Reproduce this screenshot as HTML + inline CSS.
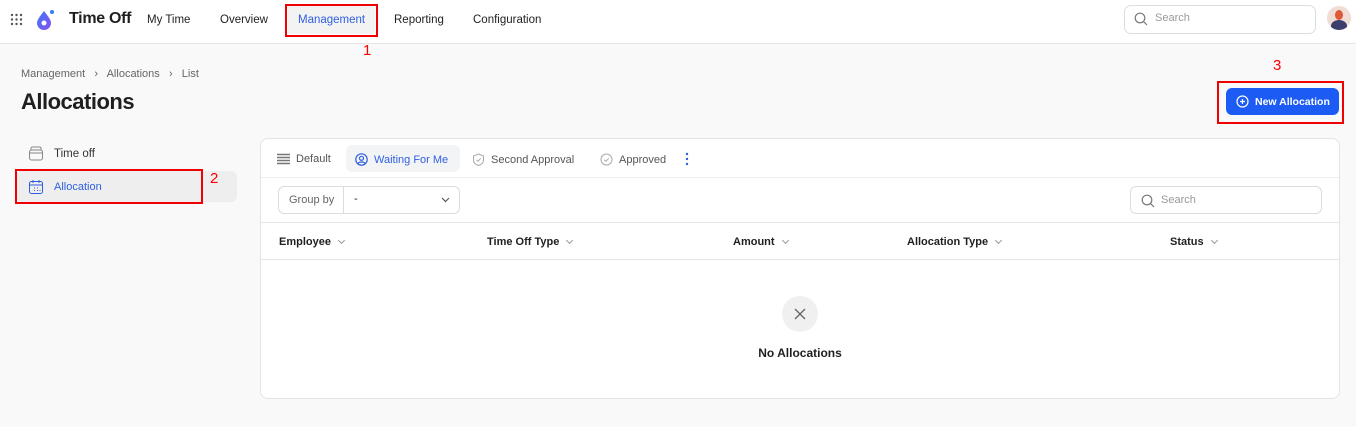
<!DOCTYPE html>
<html><head><meta charset="utf-8"><style>
*{box-sizing:border-box;margin:0;padding:0}
body{width:1356px;height:427px;background:#f9f9f9;font-family:"Liberation Sans",sans-serif;position:relative;overflow:hidden;color:#1f1f1f}
.abs{position:absolute}
.hdr{left:0;top:0;width:1356px;height:44px;background:#fff;border-bottom:1px solid #e5e5e5}
.nav{font-size:11.5px;color:#222;top:14px}
.red{border:2px solid #f00000;position:absolute}
.card{left:260px;top:138px;width:1080px;height:261px;background:#fff;border:1px solid #e3e3e3;border-radius:8px}
.tab{font-size:11px;color:#555;top:14px;display:flex;align-items:center;gap:6px}
.th{font-size:11px;font-weight:bold;top:97px;color:#1f1f1f}
.th:after{content:"";display:inline-block;width:4px;height:4px;border-right:1px solid #999;border-bottom:1px solid #999;transform:rotate(45deg);margin-left:8px;position:relative;top:-2px}
</style></head><body>
<div class="abs hdr"></div>
<svg class="abs" style="left:10px;top:13px" width="13" height="13"><g fill="#555"><circle cx="2" cy="2" r="1.2"/><circle cx="6.5" cy="2" r="1.2"/><circle cx="11" cy="2" r="1.2"/><circle cx="2" cy="6.5" r="1.2"/><circle cx="6.5" cy="6.5" r="1.2"/><circle cx="11" cy="6.5" r="1.2"/><circle cx="2" cy="11" r="1.2"/><circle cx="6.5" cy="11" r="1.2"/><circle cx="11" cy="11" r="1.2"/></g></svg>
<svg class="abs" style="left:34px;top:8px" width="22" height="22"><defs><linearGradient id="g" x1="0" y1="0" x2="1" y2="1"><stop offset="0" stop-color="#3a7bf6"/><stop offset="1" stop-color="#8a4ef0"/></linearGradient></defs><path d="M10 3 C6 8 3 12 3 15 a7 7 0 0 0 14 0 C17 12 14 8 10 3z" fill="url(#g)"/><circle cx="10" cy="15" r="2.5" fill="#fff"/><circle cx="18" cy="4" r="2" fill="#3a7bf6"/></svg>
<div class="abs" style="left:69px;top:10px;font-size:16px;font-weight:bold;letter-spacing:-0.3px">Time Off</div>
<div class="abs nav" style="left:147px">My Time</div>
<div class="abs nav" style="left:220px">Overview</div>
<div class="abs" style="left:288px;top:6px;width:87px;height:28px;background:#f3f3f3"></div>
<div class="abs nav" style="left:298px;color:#2f5fe0">Management</div>
<div class="red" style="left:285px;top:4px;width:93px;height:33px"></div>
<div class="abs" style="left:363px;top:42px;color:#f00;font-size:15px">1</div>
<div class="abs nav" style="left:394px">Reporting</div>
<div class="abs nav" style="left:473px">Configuration</div>
<div class="abs" style="left:1124px;top:5px;width:192px;height:29px;border:1px solid #ddd;border-radius:7px;background:#fff"></div>
<svg class="abs" style="left:1134px;top:12px" width="14" height="14"><circle cx="6" cy="6" r="4.8" fill="none" stroke="#777" stroke-width="1.2"/><path d="M9.5 9.5L13 13" stroke="#777" stroke-width="1.2"/></svg>
<div class="abs" style="left:1155px;top:12px;font-size:11px;color:#999">Search</div>
<div class="abs" style="left:1327px;top:6px;width:24px;height:24px;border-radius:50%;background:#f0ddd5;overflow:hidden"><div style="position:absolute;left:4px;top:14px;width:16px;height:12px;border-radius:50% 50% 0 0;background:#3c3f6e"></div><div style="position:absolute;left:8px;top:4px;width:8px;height:10px;border-radius:50%;background:#e0583a"></div></div>
<div class="abs" style="left:21px;top:68px;font-size:11px;color:#666">Management &nbsp;&nbsp;›&nbsp;&nbsp; Allocations &nbsp;&nbsp;›&nbsp;&nbsp; List</div>
<div class="abs" style="left:21px;top:89px;font-size:22px;font-weight:bold;letter-spacing:-0.5px">Allocations</div>
<div class="abs" style="left:1273px;top:57px;color:#f00;font-size:15px">3</div>
<div class="red" style="left:1217px;top:81px;width:127px;height:43px"></div>
<div class="abs" style="left:1226px;top:88px;width:113px;height:27px;background:#1c5cf5;border-radius:6px;color:#fff;font-size:10.5px;font-weight:bold;display:flex;align-items:center;padding-left:10px;gap:6px"><svg width="13" height="13"><circle cx="6.5" cy="6.5" r="5.5" fill="none" stroke="#fff" stroke-width="1.2"/><path d="M6.5 4v5M4 6.5h5" stroke="#fff" stroke-width="1.2"/></svg>New Allocation</div>
<svg class="abs" style="left:28px;top:146px" width="16" height="15"><rect x="1.5" y="4" width="13" height="10" rx="2" fill="none" stroke="#888"/><path d="M3 4V2.5a1.5 1.5 0 0 1 1.5-1.5h7A1.5 1.5 0 0 1 13 2.5V4M1.5 7h13" fill="none" stroke="#888"/></svg>
<div class="abs" style="left:54px;top:148px;font-size:11.5px;color:#333">Time off</div>
<div class="abs" style="left:16px;top:171px;width:221px;height:31px;background:#eeeeee;border-radius:6px"></div>
<svg class="abs" style="left:28px;top:179px" width="16" height="16"><rect x="1.5" y="2.5" width="13" height="12" rx="2" fill="none" stroke="#2f5fe0"/><path d="M1.5 6h13M5 1v3M11 1v3M6 9h1M9 9h1M6 11.5h1M9 11.5h1M11.5 11.5h1" stroke="#2f5fe0"/></svg>
<div class="abs" style="left:54px;top:181px;font-size:11px;color:#2f5fe0">Allocation</div>
<div class="red" style="left:15px;top:169px;width:188px;height:35px"></div>
<div class="abs" style="left:210px;top:170px;color:#f00;font-size:15px">2</div>
<div class="abs card">
 <div class="abs tab" style="left:16px"><svg width="13" height="12"><path d="M0 1.5h13M0 4.5h13M0 7.5h13M0 10.5h13" stroke="#777" stroke-width="1.6"/></svg>Default</div>
 <div class="abs" style="left:85px;top:6px;width:114px;height:27px;background:#f3f4f6;border-radius:6px"></div>
 <div class="abs tab" style="left:94px;color:#2f5fe0"><svg width="13" height="13"><circle cx="6.5" cy="6.5" r="5.7" fill="none" stroke="#2f5fe0" stroke-width="1.2"/><circle cx="6.5" cy="5.3" r="2" fill="none" stroke="#2f5fe0" stroke-width="1.2"/><path d="M3 10.5c1-2 6-2 7 0" fill="none" stroke="#2f5fe0" stroke-width="1.2"/></svg>Waiting For Me</div>
 <div class="abs tab" style="left:211px"><svg width="13" height="13"><path d="M6.5 1L11.5 3v4c0 3-2.5 4.7-5 5.5C4 11.7 1.5 10 1.5 7V3z" fill="none" stroke="#aaa"/><path d="M4.5 6.8l1.5 1.5 2.7-3" fill="none" stroke="#aaa"/></svg>Second Approval</div>
 <div class="abs tab" style="left:339px"><svg width="13" height="13"><circle cx="6.5" cy="6.5" r="5.5" fill="none" stroke="#aaa"/><path d="M4.3 6.8l1.6 1.5 2.8-3" fill="none" stroke="#aaa"/></svg>Approved</div>
 <svg class="abs" style="left:424px;top:13px" width="4" height="14"><g fill="#2f5fe0"><circle cx="2" cy="2" r="1.2"/><circle cx="2" cy="7" r="1.2"/><circle cx="2" cy="12" r="1.2"/></g></svg>
 <div class="abs" style="left:0;top:38px;width:1078px;border-top:1px solid #eee"></div>
 <div class="abs" style="left:17px;top:47px;width:182px;height:28px;border:1px solid #ddd;border-radius:6px;font-size:11px"><span class="abs" style="left:10px;top:7px;color:#666">Group by</span><span class="abs" style="left:64px;top:0;height:26px;border-left:1px solid #ddd"></span><span class="abs" style="left:75px;top:6px">-</span><svg class="abs" style="left:162px;top:10px" width="9" height="6"><path d="M1 1l3.5 3.5L8 1" fill="none" stroke="#555" stroke-width="1.2"/></svg></div>
 <div class="abs" style="left:869px;top:47px;width:192px;height:28px;border:1px solid #ddd;border-radius:6px"><svg class="abs" style="left:10px;top:7px" width="14" height="14"><circle cx="6" cy="6" r="4.8" fill="none" stroke="#777" stroke-width="1.2"/><path d="M9.5 9.5L13 13" stroke="#777" stroke-width="1.2"/></svg><span class="abs" style="left:30px;top:7px;font-size:11px;color:#999">Search</span></div>
 <div class="abs" style="left:0;top:83px;width:1078px;height:38px;border-top:1px solid #e6e6e6;border-bottom:1px solid #e6e6e6"></div>
 <div class="abs th" style="left:18px">Employee</div>
 <div class="abs th" style="left:226px">Time Off Type</div>
 <div class="abs th" style="left:472px">Amount</div>
 <div class="abs th" style="left:646px">Allocation Type</div>
 <div class="abs th" style="left:909px">Status</div>
 <div class="abs" style="left:521px;top:157px;width:36px;height:36px;border-radius:50%;background:#f0f0f0"><svg class="abs" style="left:12px;top:12px" width="12" height="12"><path d="M1 1l10 10M11 1L1 11" stroke="#666" stroke-width="1.3"/></svg></div>
 <div class="abs" style="left:0;width:1078px;top:207px;text-align:center;font-size:12px;font-weight:bold">No Allocations</div>
</div>
</body></html>
